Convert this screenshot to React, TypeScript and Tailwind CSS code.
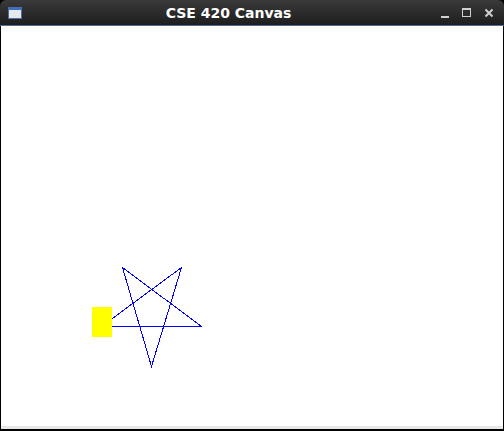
import React from "react";

// Pentagram points in page coordinates (canvas origin at 1,26)
const star = [
  [101, 326],
  [201, 326],
  [122, 267],
  [151, 366],
  [181, 267],
  [101, 326],
];

function WindowIcon() {
  return (
    <div className="w-[14px] h-[12px] border border-[#4a6ea9] bg-[#e8e8e8] flex flex-col">
      <div className="h-[2px] bg-[#3b6fc4]" />
    </div>
  );
}

export default function App() {
  const pts = star.map(([x, y]) => `${x + 0.5},${y + 0.5}`).join(" ");
  return (
    <div className="w-[504px] h-[431px] flex flex-col bg-black overflow-hidden">
      {/* Title bar */}
      <div className="h-[26px] shrink-0 flex items-center px-[8px] rounded-t-[6px] bg-gradient-to-b from-[#3a3a3a] to-[#1e1e1e] border-b border-[#4f6d93]">
        <WindowIcon />
        <div className="flex-1 text-center text-white font-bold text-[14px] leading-none font-['DejaVu_Sans',sans-serif] pr-[6px]">
          CSE 420 Canvas
        </div>
        <div className="flex items-center gap-[13px] mr-[2px]">
          <div className="w-[8px] h-[10px] flex items-end">
            <div className="w-[8px] h-[2px] bg-[#d0d0d0]" />
          </div>
          <div className="w-[9px] h-[9px] border border-[#d0d0d0] border-t-2" />
          <svg width="10" height="10" viewBox="0 0 10 10">
            <path d="M1.5 1.5 L8.5 8.5 M8.5 1.5 L1.5 8.5" stroke="#d0d0d0" strokeWidth="2" />
          </svg>
        </div>
      </div>

      {/* Canvas */}
      <div className="flex-1 mx-[1px] bg-white">
        <svg width="502" height="400" viewBox="1 26 502 400" shapeRendering="crispEdges">
          <polyline points={pts} fill="none" stroke="#0000ff" strokeWidth="1" />
          <rect x="92" y="307" width="20" height="30" fill="#ffff00" />
        </svg>
      </div>
      <div className="h-[3px] shrink-0 mx-[1px] bg-[#e8e8e8]" />
      <div className="h-[2px] shrink-0" />
    </div>
  );
}
